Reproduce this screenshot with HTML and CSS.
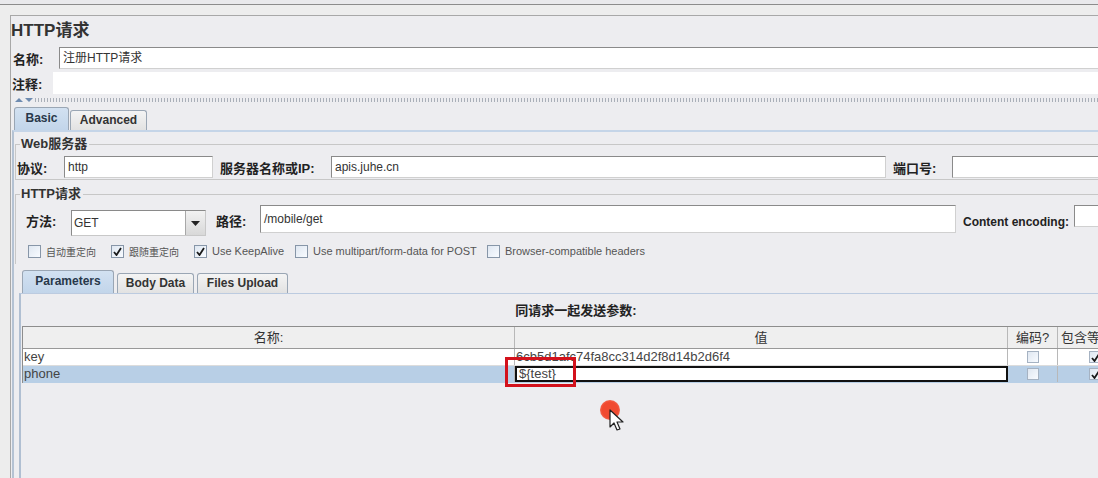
FILE: index.html
```html
<!DOCTYPE html>
<html>
<head>
<meta charset="utf-8">
<link rel="stylesheet" href="styles.css">
</head>
<body>
<div class="topbar"></div>
<div class="main">
  <div class="title">HTTP请求</div>
  <div class="row name-row">
    <span class="lbl">名称:</span>
    <div class="field grow">注册HTTP请求</div>
  </div>
  <div class="row comment-row">
    <span class="lbl">注释:</span>
    <div class="blank"></div>
  </div>
  <div class="divider"><span class="arrows"><i class="up"></i><i class="down"></i></span><span class="dots"></span></div>
  <div class="tabs top-tabs">
    <div class="tab active">Basic</div>
    <div class="tab">Advanced</div>
  </div>
  <div class="tabpanel">
    <fieldset class="group web">
      <legend>Web服务器</legend>
      <div class="row frow">
        <span class="lbl l-proto">协议:</span>
        <div class="field f-proto">http</div>
        <span class="lbl l-host">服务器名称或IP:</span>
        <div class="field f-host">apis.juhe.cn</div>
        <span class="lbl l-port">端口号:</span>
        <div class="field grow"></div>
      </div>
    </fieldset>
    <fieldset class="group http">
      <legend>HTTP请求</legend>
      <div class="row mrow">
        <span class="lbl l-method">方法:</span>
        <div class="combo"><span class="combo-text">GET</span><span class="combo-btn"><svg width="9" height="5" viewBox="0 0 9 5"><path d="M0 0H9L4.5 5Z" fill="#222"/></svg></span></div>
        <span class="lbl l-path">路径:</span>
        <div class="field f-path">/mobile/get</div>
        <span class="lbl l-enc">Content encoding:</span>
        <div class="field grow"></div>
      </div>
      <div class="row checks">
        <label class="chk c1"><span class="box"></span><span class="cjk">自动重定向</span></label>
        <label class="chk c2"><span class="box on"><svg width="9" height="9" viewBox="0 0 9 9"><path d="M1 5L3.5 8L8 1" stroke="#1a1a1a" stroke-width="1.8" fill="none"/></svg></span><span class="cjk">跟随重定向</span></label>
        <label class="chk c3"><span class="box on"><svg width="9" height="9" viewBox="0 0 9 9"><path d="M1 5L3.5 8L8 1" stroke="#1a1a1a" stroke-width="1.8" fill="none"/></svg></span>Use KeepAlive</label>
        <label class="chk c4"><span class="box"></span>Use multipart/form-data for POST</label>
        <label class="chk c5"><span class="box"></span>Browser-compatible headers</label>
      </div>
    </fieldset>
    <div class="tabs sub-tabs">
      <div class="tab active">Parameters</div>
      <div class="tab">Body Data</div>
      <div class="tab">Files Upload</div>
    </div>
    <div class="subpanel">
      <div class="caption">同请求一起发送参数:</div>
      <div class="table">
        <div class="trow thead">
          <div class="c cn">名称:</div>
          <div class="c cv">值</div>
          <div class="c ce">编码?</div>
          <div class="c ci">包含等于?</div>
        </div>
        <div class="trow">
          <div class="c cn left">key</div>
          <div class="c cv left">6cb5d1afc74fa8cc314d2f8d14b2d6f4</div>
          <div class="c ce"><span class="cb"></span></div>
          <div class="c ci"><span class="cb on"><svg width="9" height="9" viewBox="0 0 9 9"><path d="M1 5L3.5 8L8 1" stroke="#1a1a1a" stroke-width="1.8" fill="none"/></svg></span></div>
        </div>
        <div class="trow sel">
          <div class="c cn left">phone</div>
          <div class="c cv left edit">${test}</div>
          <div class="c ce"><span class="cb"></span></div>
          <div class="c ci"><span class="cb on"><svg width="9" height="9" viewBox="0 0 9 9"><path d="M1 5L3.5 8L8 1" stroke="#1a1a1a" stroke-width="1.8" fill="none"/></svg></span></div>
        </div>
      </div>
    </div>
  </div>
</div>
<div class="redbox"></div>
<div class="clickdot"></div>
<svg class="cursor" width="16" height="24" viewBox="0 0 16 24"><path d="M1 1L1 18L5 14L8 21L11 20L8 13L14 13Z" fill="#fff" stroke="#222" stroke-width="1.2" stroke-linejoin="round"/></svg>
</body>
</html>
```

FILE: styles.css
```css
* { box-sizing: border-box; }
html, body { margin: 0; padding: 0; }
body {
  width: 1098px;
  height: 478px;
  overflow: hidden;
  background: #ededed;
  font-family: "Liberation Sans", "Noto Sans CJK SC", sans-serif;
  font-size: 12px;
  color: #222;
  position: relative;
}
.topbar {
  height: 5px;
  background: #e9e9ec;
  border-bottom: 1px solid #8c8c8c;
}
.main {
  margin: 10px 0 0 10px;
  width: 1160px;
  border-top: 1px solid #a8a8a8;
  border-left: 1px solid #a8a8a8;
  background: #ededf0;
  height: 470px;
}
.title {
  height: 31px;
  padding: 4px 0 0 0;
  font-size: 17px;
  font-weight: bold;
  color: #333;
  line-height: 22px;
}
.row { display: flex; align-items: center; }
.lbl {
  font-weight: bold;
  color: #222;
  font-size: 13px;
  white-space: nowrap;
}
.field {
  height: 22px;
  background: #fff;
  border: 1px solid #aaa;
  border-top-color: #8a8a8a;
  border-left-color: #8a8a8a;
  border-bottom-color: #d0d0d0;
  border-right-color: #d0d0d0;
  padding: 0 3px;
  line-height: 20px;
  font-size: 12px;
  color: #333;
  white-space: nowrap;
}
.grow { flex: 1; }
.name-row { height: 22px; padding-left: 2px; }
.name-row .lbl { width: 46px; }
.comment-row { height: 24px; margin-top: 2px; padding-left: 1px; }
.comment-row .lbl { width: 41px; }
.blank { flex: 1; height: 22px; background: #fff; }
.divider {
  height: 10px;
  display: flex;
  align-items: center;
  padding-left: 4px;
}
.arrows { display: flex; gap: 2px; margin-right: 1px; }
.arrows i { display: block; width: 0; height: 0; border-left: 4px solid transparent; border-right: 4px solid transparent; }
.arrows .up { border-bottom: 4px solid #6e8bb0; }
.arrows .down { border-top: 4px solid #6e8bb0; }
.dots {
  flex: 1;
  height: 4px;
  background-image: radial-gradient(circle, #a9afb8 0.8px, transparent 1.1px);
  background-size: 3px 2px;
}
.tabs { display: flex; align-items: flex-end; }
.top-tabs { height: 24px; margin-top: 1px; padding-left: 3px; gap: 1px; }
.tab {
  font-weight: bold;
  font-size: 12px;
  color: #333;
  border: 1px solid #9aa6b4;
  border-bottom: none;
  border-radius: 3px 3px 0 0;
  background: linear-gradient(#f4f4f4, #e2e2e2);
  padding: 0 8px;
  height: 20px;
  line-height: 19px;
}
.tab.active {
  background: linear-gradient(#d2e1f1, #c2d5ea);
  height: 23px;
  line-height: 21px;
  color: #28384a;
}
.top-tabs .tab:first-child { width: 55px; text-align: center; padding: 0; }
.top-tabs .tab:nth-child(2) { width: 77px; text-align: center; padding: 0; }
.tabpanel {
  border-top: 2px solid #c5d5e8;
  border-left: 2px solid #b4c2d3;
  margin-left: 1px;
  padding-left: 1px;
  height: 400px;
}
.group {
  margin: 0;
  padding: 0 0 0 1px;
  border: 1px solid #c7c7c7;
  border-right: none;
  min-width: 0;
}
.group legend {
  font-weight: bold;
  font-size: 13px;
  color: #333;
  padding: 0 2px 0 1px;
  margin-left: 3px;
  line-height: 14px;
}
.web { margin-top: 5px; height: 43px; }
.frow { height: 22px; margin-top: 5px; }
.l-proto { width: 47px; }
.f-proto { width: 149px; }
.l-host { margin-left: 7px; width: 111px; }
.f-host { width: 555px; }
.l-port { margin-left: 7px; width: 59px; }
.http { margin-top: 7px; border-bottom: none; height: 77px; }
.mrow { height: 28px; margin-top: 4px; align-items: flex-start; }
.mrow .lbl { line-height: 28px; margin-top: 3px; }
.l-method { width: 54px; padding-left: 9px; }
.combo {
  width: 135px;
  height: 26px;
  display: flex;
  border: 1px solid #8a8a8a;
  border-bottom-color: #c8c8c8;
  border-right-color: #c8c8c8;
  background: #fff;
  margin-top: 5px;
}
.combo-text { flex: 1; line-height: 24px; padding-left: 2px; font-size: 12px; color: #333; }
.combo-btn {
  width: 20px;
  display: flex;
  align-items: center;
  justify-content: center;
  background: linear-gradient(#f2f2f2, #d8d8d8);
  border-left: 1px solid #a8a8a8;
}
.l-path { margin-left: 10px; width: 44px; }
.f-path { width: 696px; height: 28px; line-height: 26px; }
.l-enc { margin-left: 7px; width: 111px; font-size: 12px; }
.checks { height: 16px; margin-top: 10px; font-size: 11px; color: #555; }
.chk { display: flex; align-items: center; white-space: nowrap; }
.cjk { font-size: 10px; }
.box, .cb {
  display: inline-flex;
  align-items: center;
  justify-content: center;
  width: 13px;
  height: 13px;
  border: 1px solid #8796a8;
  background: linear-gradient(135deg, #dfe7f1, #f8fbff);
}
.box { margin-right: 5px; }
.c1 { margin-left: 11px; width: 83px; }
.c2 { width: 83px; }
.c3 { width: 101px; }
.c4 { width: 192px; }
.sub-tabs { height: 23px; margin-top: 6px; padding-left: 7px; gap: 3px; }
.sub-tabs .tab:nth-child(1) { width: 92px; padding: 0; text-align: center; }
.sub-tabs .tab:nth-child(2) { width: 77px; padding: 0; text-align: center; }
.sub-tabs .tab:nth-child(3) { width: 91px; padding: 0; text-align: center; }
.subpanel {
  margin-left: 4px;
  border-top: 1px solid #bccbe0;
  border-left: 2px solid #b0bfd2;
  height: 200px;
  padding-left: 1px;
}
.caption {
  width: 1108px;
  text-align: center;
  font-weight: bold;
  font-size: 13px;
  height: 32px;
  line-height: 18px;
  padding-top: 8px;
  color: #222;
}
.table { border-top: 1px solid #8d8d8d; border-left: 1px solid #8d8d8d; width: 1120px; }
.trow { display: flex; height: 17px; border-bottom: 1px solid #dcdcdc; background: #fff; }
.thead { height: 22px; background: #efefef; border-bottom: 1px solid #999; }
.c {
  border-right: 1px solid #b8b8b8;
  font-size: 13px;
  color: #333;
  text-align: center;
  line-height: 16px;
  white-space: nowrap;
  overflow: hidden;
  display: flex;
  align-items: center;
  justify-content: center;
}
.thead .c { line-height: 21px; color: #333; }
.c.left { justify-content: flex-start; padding-left: 1px; color: #444; }
.cn { width: 492px; }
.cv { width: 493px; }
.ce { width: 50px; }
.ci { width: 80px; justify-content: flex-start; padding-left: 3px; }
.thead .ci { justify-content: flex-start; padding-left: 3px; }
.trow .ci .cb { margin-left: 28px; }
.cb { width: 12px; height: 12px; border-color: #a5b2c2; }
.trow.sel { background: #b8cfe6; border-bottom-color: #b8cfe6; }
.cv.edit { background: #fff; border: 2px solid #111; padding-left: 2px; }
.redbox {
  position: absolute;
  left: 505px;
  top: 357px;
  width: 71px;
  height: 30px;
  border: 3px solid #d3121c;
}
.clickdot {
  position: absolute;
  left: 600px;
  top: 400px;
  width: 20px;
  height: 20px;
  border-radius: 50%;
  background: radial-gradient(circle, #f04a30 55%, #f57a66 85%, rgba(245,122,102,0) 100%);
}
.cursor { position: absolute; left: 609px; top: 409px; }
```
